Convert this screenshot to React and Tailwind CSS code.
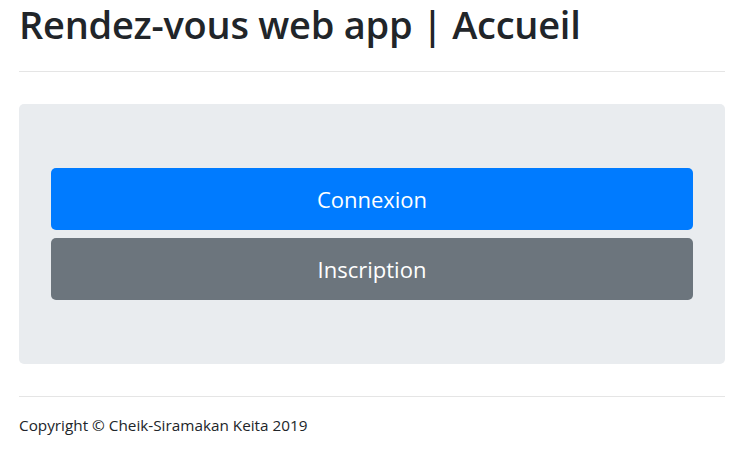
export default function App() {
  return (
    <div className="min-h-[455px] bg-white pl-[19px] pr-[24px] text-[#212529] font-['Open_Sans','Noto_Sans',sans-serif] flex flex-col">
      <h1 className="text-[38px] font-semibold leading-[48px] tracking-[-0.25px]">
        Rendez-vous web app | Accueil
      </h1>
      <hr className="mt-[23px] border-t border-black/10" />
      <div className="mt-8 rounded-[5px] bg-[#e9ecef] px-8 py-16 flex flex-col gap-2">
        <button
          type="button"
          className="h-[62px] w-full rounded-[5px] bg-[#007bff] text-[22px] text-white"
        >
          Connexion
        </button>
        <button
          type="button"
          className="h-[62px] w-full rounded-[5px] bg-[#6c757d] text-[22px] text-white"
        >
          Inscription
        </button>
      </div>
      <hr className="mt-8 border-t border-black/10" />
      <p className="mt-[18px] text-[15.3px] leading-[21px]">
        Copyright © Cheik-Siramakan Keita 2019
      </p>
    </div>
  );
}
